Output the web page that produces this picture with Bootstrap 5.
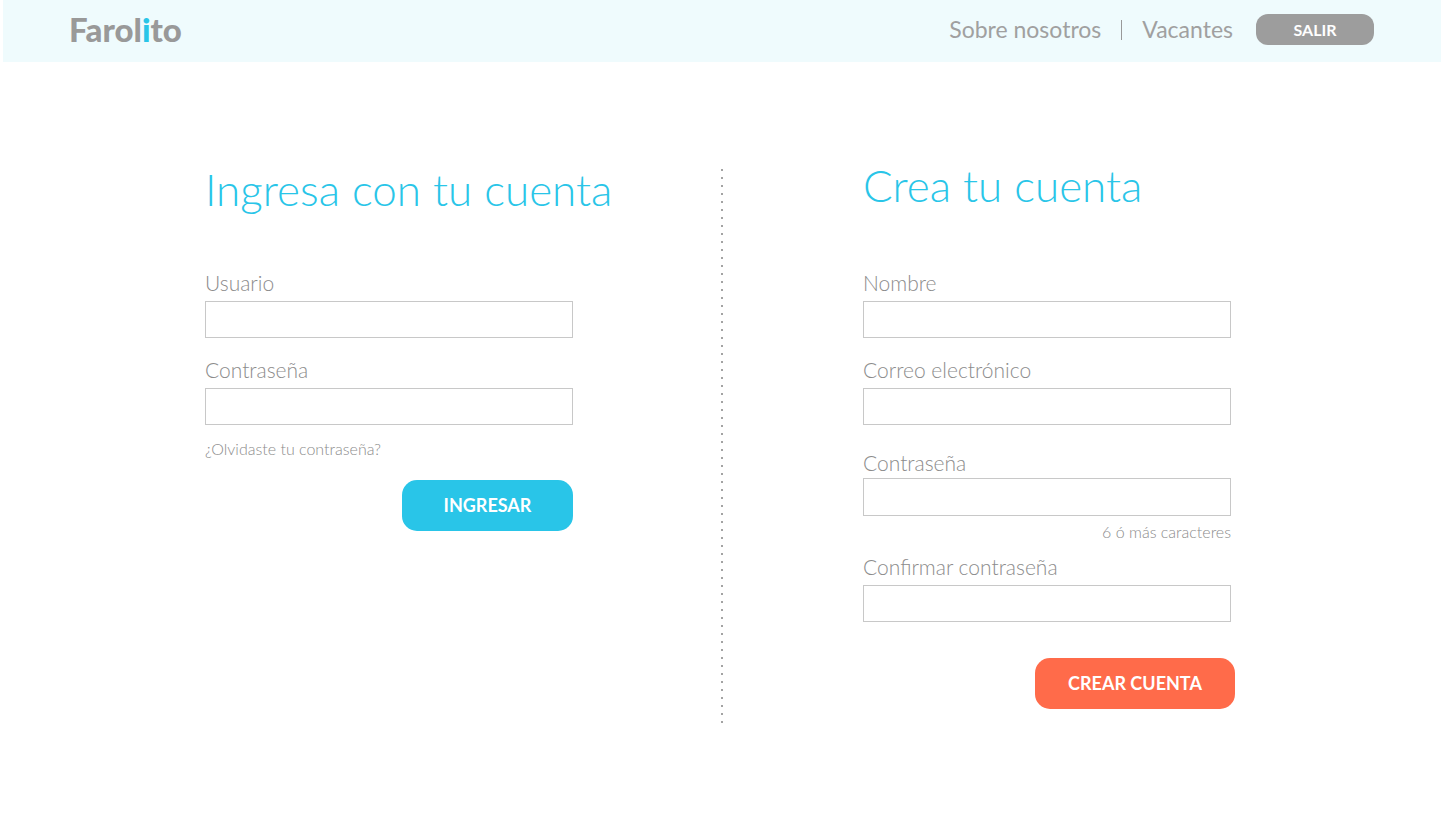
<!DOCTYPE html>
<html lang="es">
<head>
<meta charset="utf-8">
<meta name="viewport" content="width=device-width, initial-scale=1">
<title>Farolito</title>
<link href="https://cdn.jsdelivr.net/npm/bootstrap@5.3.0/dist/css/bootstrap.min.css" rel="stylesheet">
<style>
  body { font-family: Lato, "Open Sans", sans-serif; font-weight: 300; color: #8c8c8c; background: #fff; padding-left: 3px; }
  a { color: inherit; text-decoration: none; }
  .topbar { background: #effbfd; min-height: 62px; padding: 0 67px 3px 66px; }
  .brand { font-size: 33px; line-height: 59px; font-weight: 900; color: #999; }
  .brand-i { color: #29c5e8; }
  .menu { font-size: 23px; line-height: 31px; font-weight: 400; color: #a0a0a0; }
  .bar { width: 1px; height: 20px; margin: 0 20px; background: #999; }
  .btn-exit { width: 118px; height: 31px; margin-left: 23px; padding: 0; border: 0; border-radius: 12px; background: #9d9d9d; color: #fff; font-size: 16px; line-height: 31px; font-weight: 700; }
  .panels { display: grid; grid-template-columns: 1fr 2px 1fr; padding: 101px 0; }
  .divider { height: 554px; margin-top: 6px; background: repeating-linear-gradient(#a3a3a3 0 2px, transparent 2px 8px); }
  .signin { padding-left: 202px; }
  .signup { padding-left: 140px; }
  h1 { min-height: 107px; font-size: 44px; line-height: 44px; font-weight: 300; color: #29c5e8; margin: 0; white-space: nowrap; }
  .signin h1 { padding-top: 4px; }
  .fields { max-width: 368px; }
  label { display: block; margin-bottom: 6px; font-size: 21px; line-height: 25px; }
  .form-control { height: 37px; border: 1px solid #c8c8c8; border-radius: 0; padding: 4px 8px; }
  .field { margin-bottom: 19px; }
  .note { font-size: 16px; line-height: 20px; }
  .forgot { margin: 14px 0 21px; }
  .hint { margin: 6px 0 12px; }
  .field-key { margin-top: 25px; }
  .field-key label { margin-bottom: 3px; }
  .field-key .form-control { height: 38px; }
  .btn-main { height: 51px; border: 0; border-radius: 15px; padding: 0; color: #fff; font-size: 18px; line-height: 51px; font-weight: 700; }
  .btn-enter { width: 171px; background: #29c5e8; }
  .btn-create { width: 200px; background: #ff6b4a; margin: 36px -4px 0 0; }
  .btn-enter:hover { background: #20b5d6; color: #fff; }
  .btn-create:hover { background: #ef5b3a; color: #fff; }
  .btn-exit:hover { background: #888; color: #fff; }
  @media (max-width: 1199px) {
    .panels { grid-template-columns: 1fr; gap: 48px; padding: 48px 24px; }
    .divider { display: none; }
    .signin, .signup { padding-left: 0; }
    .topbar { padding: 0 24px; }
    h1 { white-space: normal; }
  }
</style>
</head>
<body>
<header class="topbar d-flex flex-wrap align-items-center justify-content-between">
  <a class="brand" href="#">Farol<span class="brand-i">i</span>to</a>
  <nav class="menu d-flex flex-wrap align-items-center">
    <a href="#">Sobre nosotros</a>
    <span class="bar"></span>
    <a href="#">Vacantes</a>
    <button class="btn btn-exit" type="button">SALIR</button>
  </nav>
</header>
<main class="panels">
  <section class="signin">
    <h1>Ingresa con tu cuenta</h1>
    <form class="fields">
      <div class="field">
        <label for="user">Usuario</label>
        <input class="form-control" id="user" type="text">
      </div>
      <div>
        <label for="pass">Contraseña</label>
        <input class="form-control" id="pass" type="password">
      </div>
      <a class="note forgot d-block" href="#">¿Olvidaste tu contraseña?</a>
      <div class="d-flex justify-content-end"><button class="btn btn-main btn-enter" type="submit">INGRESAR</button></div>
    </form>
  </section>
  <div class="divider"></div>
  <section class="signup">
    <h1>Crea tu cuenta</h1>
    <form class="fields">
      <div class="field">
        <label for="name">Nombre</label>
        <input class="form-control" id="name" type="text">
      </div>
      <div>
        <label for="mail">Correo electrónico</label>
        <input class="form-control" id="mail" type="email">
      </div>
      <div class="field-key">
        <label for="newpass">Contraseña</label>
        <input class="form-control" id="newpass" type="password" aria-describedby="hint">
      </div>
      <div class="note hint text-end" id="hint">6 ó más caracteres</div>
      <div>
        <label for="again">Confirmar contraseña</label>
        <input class="form-control" id="again" type="password">
      </div>
      <div class="d-flex justify-content-end"><button class="btn btn-main btn-create" type="submit">CREAR CUENTA</button></div>
    </form>
  </section>
</main>
<script src="https://cdn.jsdelivr.net/npm/bootstrap@5.3.0/dist/js/bootstrap.bundle.min.js"></script>
</body>
</html>
